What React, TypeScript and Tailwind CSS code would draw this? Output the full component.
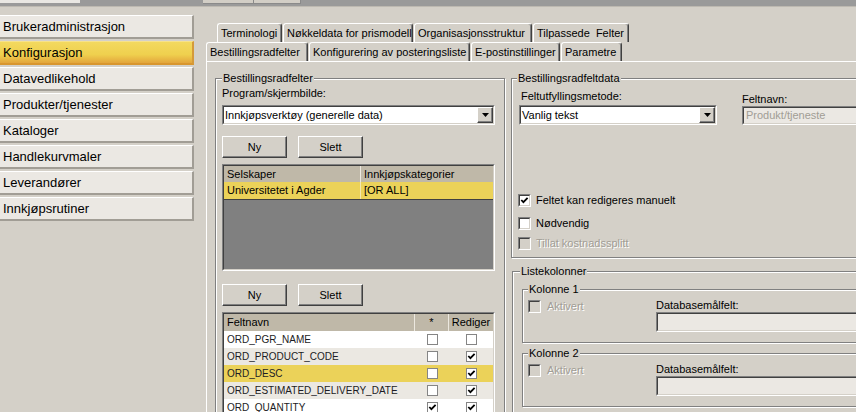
import React from "react";

const menu = [
  "Brukeradministrasjon",
  "Konfigurasjon",
  "Datavedlikehold",
  "Produkter/tjenester",
  "Kataloger",
  "Handlekurvmaler",
  "Leverandører",
  "Innkjøpsrutiner",
];

const tabsTop = [
  { label: "Terminologi", w: "w-[65px]" },
  { label: "Nøkkeldata for prismodell", w: "w-[130px]" },
  { label: "Organisasjonsstruktur", w: "w-[118px]" },
  { label: "Tilpassede  Felter", w: "w-[96px]" },
];

const tabsBottom = [
  { label: "Bestillingsradfelter", w: "w-[102px]" },
  { label: "Konfigurering av posteringsliste", w: "w-[161px]" },
  { label: "E-postinstillinger", w: "w-[89px]" },
  { label: "Parametre", w: "w-[61px]" },
];

const fields = [
  { name: "ORD_PGR_NAME", star: false, edit: false, bg: "bg-white" },
  { name: "ORD_PRODUCT_CODE", star: false, edit: true, bg: "bg-[#ebe8e2]" },
  { name: "ORD_DESC", star: false, edit: true, bg: "bg-[#ebd259]" },
  { name: "ORD_ESTIMATED_DELIVERY_DATE", star: false, edit: true, bg: "bg-[#ebe8e2]" },
  { name: "ORD_QUANTITY", star: true, edit: true, bg: "bg-white" },
];

function Tick() {
  return (
    <svg width="9" height="9" viewBox="0 0 9 9" className="block">
      <path d="M1.3 4 L3.4 6.2 L7.6 1.9" fill="none" stroke="#000" strokeWidth="1.8" />
    </svg>
  );
}

function Box({ checked, disabled }: { checked?: boolean; disabled?: boolean }) {
  return (
    <span className="flex w-[13px] h-[13px] shrink-0 border border-[#808080] border-b-white border-r-white">
      <span
        className={
          disabled
            ? "flex-1 flex items-center justify-center border border-[#404040] border-b-[#d4d0c8] border-r-[#d4d0c8] bg-[#d4d0c8]"
            : "flex-1 flex items-center justify-center border border-[#404040] border-b-[#d4d0c8] border-r-[#d4d0c8] bg-white"
        }
      >
        {checked && <Tick />}
      </span>
    </span>
  );
}

function SmallBox({ checked }: { checked?: boolean }) {
  return (
    <span className="flex w-[11px] h-[11px] border border-[#858585] bg-white items-center justify-center">
      {checked && <Tick />}
    </span>
  );
}

function Btn({ label }: { label: string }) {
  return (
    <div className="w-[65px] h-[22px] flex items-center justify-center border border-white border-r-[#404040] border-b-[#404040] shadow-[inset_-1px_-1px_0_#808080]">
      {label}
    </div>
  );
}

function Combo({ value, className }: { value: string; className: string }) {
  return (
    <div className={className + " h-[20px] border border-[#808080] border-b-white border-r-white"}>
      <div className="h-full flex border border-[#404040] border-b-[#d4d0c8] border-r-[#d4d0c8] bg-white">
        <span className="flex-1 pl-[1px] leading-[16px] whitespace-nowrap">{value}</span>
        <span className="w-[16px] h-[16px] flex items-center justify-center bg-[#d4d0c8] border border-white border-r-[#404040] border-b-[#404040] shadow-[inset_-1px_-1px_0_#808080]">
          <svg width="7" height="4" viewBox="0 0 7 4" className="block">
            <path d="M0 0h7L3.5 4z" fill="#000" />
          </svg>
        </span>
      </div>
    </div>
  );
}

function Disabled({ children }: { children: React.ReactNode }) {
  return <span className="text-[#a19d95] [text-shadow:1px_1px_0_#fff]">{children}</span>;
}

function Kolonne({ n, top }: { n: number; top: string }) {
  return (
    <fieldset className={top + " w-[360px] h-[61px] pl-[5px] border border-[#808080] shadow-[inset_1px_1px_0_#fff,1px_1px_0_#fff]"}>
      <legend className="px-[1px] leading-[14px] bg-[#d4d0c8]">Kolonne {n}</legend>
      <div className="flex">
        <div className="w-[128px] mt-[4px] h-[13px] flex items-center gap-[6px]">
          <Box disabled />
          <Disabled>Aktivert</Disabled>
        </div>
        <div className="flex-1">
          <div className="mt-[3px] leading-[12px]">Databasemålfelt:</div>
          <div className="mt-[1px] h-[20px] border border-[#808080] border-b-white border-r-white">
            <div className="h-full border border-[#404040] border-b-[#d4d0c8] border-r-[#d4d0c8] bg-[#ebe8e3]" />
          </div>
        </div>
      </div>
    </fieldset>
  );
}

export default function App() {
  return (
    <div className="w-[856px] h-[412px] overflow-hidden bg-[#d4d0c8] text-[11px] text-black font-['Liberation_Sans',Arial,sans-serif]">
      {/* top strip */}
      <div className="h-[7px] flex items-start bg-[#9a9a9a] border-b border-[#bdb9b1]">
        <span className="w-[80px] h-[3px] bg-[#e9e7e3]" />
        <span className="ml-[123px] w-[51px] h-[4px] bg-[#d2cec6] border-b border-r border-[#8a8a8a]" />
        <span className="w-[47px] h-[4px] bg-[#d2cec6] border-b border-r border-[#8a8a8a]" />
      </div>

      <div className="flex h-[405px]">
        {/* left menu */}
        <div className="w-[194px] shrink-0 pt-[8px] flex flex-col gap-[2px]">
          {menu.map((m) => (
            <div
              key={m}
              className={
                m === "Konfigurasjon"
                  ? "h-[24px] flex items-center pl-[3px] text-[13px] bg-[linear-gradient(#f3d95f,#efd04e_60%,#e3a53c)] border-t border-t-[#f7e28a] border-r-2 border-r-[#d49a3a] border-b-2 border-b-[#d8962f]"
                  : "h-[24px] flex items-center pl-[3px] text-[13px] bg-[#ebe8e3] border-t border-t-white border-r-2 border-r-[#a19d95] border-b-2 border-b-[#a19d95]"
              }
            >
              {m}
            </div>
          ))}
        </div>

        {/* content */}
        <div className="flex-1 min-w-0 pl-[12px] pt-[16px] flex flex-col">
          <div className="flex h-[19px] pl-[11px] gap-[1px]">
            {tabsTop.map((t) => (
              <div
                key={t.label}
                className={t.w + " shrink-0 h-[19px] flex items-center pl-[3px] whitespace-pre border-t border-l border-white border-r border-r-[#404040] rounded-t-[3px] shadow-[inset_-1px_0_0_#808080]"}
              >
                {t.label}
              </div>
            ))}
          </div>
          <div className="flex h-[19px] gap-[1px]">
            {tabsBottom.map((t) => (
              <div
                key={t.label}
                className={t.w + " shrink-0 h-[19px] flex items-center pl-[3px] whitespace-nowrap border-t border-l border-white border-r border-r-[#404040] rounded-t-[3px] shadow-[inset_-1px_0_0_#808080]"}
              >
                {t.label}
              </div>
            ))}
          </div>

          <div className="flex-1 flex items-start border-t border-l border-white">
            {/* left group */}
            <fieldset className="ml-[8px] mt-[9px] w-[290px] h-[400px] pl-[6px] pr-[9px] shrink-0 border border-[#808080] shadow-[inset_1px_1px_0_#fff,1px_1px_0_#fff]">
              <legend className="px-[1px] leading-[14px] bg-[#d4d0c8]">Bestillingsradfelter</legend>
              <div className="mt-[1px] leading-[14px]">Program/skjermbilde:</div>
              <Combo className="mt-[5px] w-[273px]" value="Innkjøpsverktøy (generelle data)" />
              <div className="mt-[11px] flex gap-[11px]">
                <Btn label="Ny" />
                <Btn label="Slett" />
              </div>
              <div className="mt-[6px] w-[273px] h-[107px] border border-[#808080] border-b-white border-r-white">
                <div className="h-full flex flex-col border border-[#404040] border-b-[#d4d0c8] border-r-[#d4d0c8] bg-[#808080]">
                  <div className="flex h-[16px] bg-[#bfb8a8] leading-[16px]">
                    <div className="w-[137px] pl-[3px] border-r border-[#ece8df]">Selskaper</div>
                    <div className="flex-1 pl-[3px]">Innkjøpskategorier</div>
                  </div>
                  <div className="flex h-[18px] bg-[#ebd259] leading-[17px] border-b border-[#404040]">
                    <div className="w-[137px] pl-[3px] border-r border-[#f3e7b0]">Universitetet i Agder</div>
                    <div className="flex-1 pl-[3px]">[OR ALL]</div>
                  </div>
                </div>
              </div>
              <div className="mt-[13px] flex gap-[11px]">
                <Btn label="Ny" />
                <Btn label="Slett" />
              </div>
              <div className="mt-[6px] w-[273px] h-[120px] border border-[#808080] border-b-white border-r-white">
                <div className="h-full flex flex-col border border-[#404040] border-b-[#d4d0c8] border-r-[#d4d0c8] bg-white">
                  <div className="flex h-[17px] bg-[#bfb8a8] leading-[17px]">
                    <div className="w-[191px] pl-[3px] border-r border-[#ece8df]">Feltnavn</div>
                    <div className="w-[34px] text-center border-r border-[#ece8df]">*</div>
                    <div className="flex-1 text-center">Rediger</div>
                  </div>
                  {fields.map((f) => (
                    <div key={f.name} className={f.bg + " flex h-[17px] items-center text-[10px] text-[#1c1c24]"}>
                      <div className="w-[191px] pl-[3px] whitespace-nowrap">{f.name}</div>
                      <div className="w-[34px] flex justify-center">
                        <SmallBox checked={f.star} />
                      </div>
                      <div className="flex-1 flex justify-center">
                        <SmallBox checked={f.edit} />
                      </div>
                    </div>
                  ))}
                </div>
              </div>
            </fieldset>

            {/* right column */}
            <div className="ml-[6px] mt-[9px] flex flex-col shrink-0">
              <fieldset className="w-[360px] h-[187px] pl-[7px] border border-[#808080] shadow-[inset_1px_1px_0_#fff,1px_1px_0_#fff]">
                <legend className="ml-[-2px] px-[1px] leading-[14px] bg-[#d4d0c8]">Bestillingsradfeltdata</legend>
                <div className="flex">
                  <div className="w-[198px]">
                    <div className="mt-[4px] ml-[2px] leading-[14px]">Feltutfyllingsmetode:</div>
                    <Combo className="mt-[2px] w-[198px]" value="Vanlig tekst" />
                  </div>
                  <div className="ml-[25px] flex-1">
                    <div className="mt-[7px] leading-[14px]">Feltnavn:</div>
                    <div className="h-[19px] border border-[#808080] border-b-white border-r-white">
                      <div className="h-full border border-[#404040] border-b-[#d4d0c8] border-r-[#d4d0c8] bg-[#ebe8e3] pl-[2px] leading-[15px] text-[#a19d95]">
                        Produkt/tjeneste
                      </div>
                    </div>
                  </div>
                </div>
                <div className="mt-[69px] ml-[-1px] h-[13px] flex items-center gap-[5px]">
                  <Box checked />
                  <span>Feltet kan redigeres manuelt</span>
                </div>
                <div className="mt-[10px] ml-[-1px] h-[13px] flex items-center gap-[5px]">
                  <Box />
                  <span>Nødvendig</span>
                </div>
                <div className="mt-[7px] ml-[-1px] h-[13px] flex items-center gap-[5px]">
                  <Box disabled />
                  <Disabled>Tillat kostnadssplitt</Disabled>
                </div>
              </fieldset>

              <fieldset className="mt-[6px] ml-[1px] w-[359px] h-[200px] pl-[9px] border border-[#808080] shadow-[inset_1px_1px_0_#fff,1px_1px_0_#fff]">
                <legend className="ml-[-2px] px-[1px] leading-[14px] bg-[#d4d0c8]">Listekolonner</legend>
                <Kolonne n={1} top="mt-[4px]" />
                <Kolonne n={2} top="mt-[3px]" />
              </fieldset>
            </div>
          </div>
        </div>
      </div>
    </div>
  );
}
